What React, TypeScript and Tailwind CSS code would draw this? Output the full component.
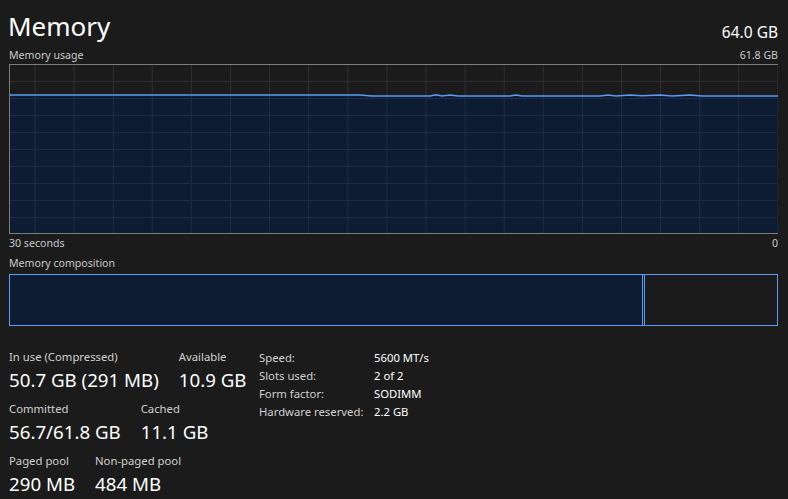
import React from "react";

const font = { fontFamily: '"Segoe UI", "Noto Sans", "Open Sans", sans-serif' };

// usage line, a few small bumps where the value wobbles
const linePts: [number, number][] = [
  [0, 30], [350, 30], [356, 30.6], [362, 31], [420, 31], [426, 29.8], [432, 31],
  [440, 30], [448, 31], [500, 31], [506, 30], [512, 31], [590, 31], [598, 29.9],
  [606, 31], [620, 29.9], [632, 30.8], [650, 30], [662, 31], [680, 30], [692, 31], [768, 31],
];

function UsageChart() {
  const w = 768;
  const h = 168;
  const vLines = Array.from({ length: 20 }, (_, i) => 25 + i * 39.1).filter((x) => x < w);
  const hLines = Array.from({ length: 9 }, (_, i) => 16 + i * 17);
  const line = linePts.map(([x, y]) => `${x},${y}`).join(" ");
  const area = `M0,${h} L${linePts.map(([x, y]) => `${x},${y}`).join(" L")} L${w},${h} Z`;
  return (
    <div className="h-[170px] w-full border border-[#7c7c7c]">
      <svg width={w} height={h} viewBox={`0 0 ${w} ${h}`} className="block">
        <defs>
          <clipPath id="fillclip">
            <path d={area} />
          </clipPath>
        </defs>
        <rect width={w} height={h} fill="#1b1b1b" />
        {vLines.map((x) => (
          <line key={`v${x}`} x1={x} x2={x} y1={0} y2={h} stroke="#2f2f2f" strokeWidth={1} />
        ))}
        {hLines.map((y) => (
          <line key={`h${y}`} x1={0} x2={w} y1={y + 0.5} y2={y + 0.5} stroke="#2f2f2f" strokeWidth={1} />
        ))}
        <path d={area} fill="#0e1c33" />
        <g clipPath="url(#fillclip)">
          {vLines.map((x) => (
            <line key={`fv${x}`} x1={x} x2={x} y1={0} y2={h} stroke="#1f2c42" strokeWidth={1} />
          ))}
          {hLines.map((y) => (
            <line key={`fh${y}`} x1={0} x2={w} y1={y + 0.5} y2={y + 0.5} stroke="#1f2c42" strokeWidth={1} />
          ))}
        </g>
        <polyline points={line} fill="none" stroke="#5a9cf6" strokeWidth={1.5} />
      </svg>
    </div>
  );
}

function Stat({ label, value }: { label: string; value: string }) {
  return (
    <div className="flex flex-col">
      <span className="text-[11.3px] leading-[16px] text-[#d0d0d0]">{label}</span>
      <span className="mt-[2px] text-[18.7px] leading-[25px] text-white">{value}</span>
    </div>
  );
}

export default function App() {
  const specs = [
    ["Speed:", "5600 MT/s"],
    ["Slots used:", "2 of 2"],
    ["Form factor:", "SODIMM"],
    ["Hardware reserved:", "2.2 GB"],
  ];
  return (
    <div className="h-[499px] w-[788px] overflow-hidden bg-[#1b1b1b] pl-[9px] pr-[10px]" style={font}>
      <div className="flex h-[47px] items-end justify-between pb-[4px]">
        <span className="ml-[-1px] text-[26px] leading-[34px] text-white">Memory</span>
        <span className="text-[15.5px] leading-[22px] text-white">64.0 GB</span>
      </div>
      <div className="flex h-[17px] items-center justify-between text-[10.6px] text-[#c9c9c9]">
        <span>Memory usage</span>
        <span>61.8 GB</span>
      </div>
      <UsageChart />
      <div className="flex h-[20px] items-center justify-between text-[10.6px] text-[#c9c9c9]">
        <span>30 seconds</span>
        <span>0</span>
      </div>
      <div className="flex h-[19px] items-center text-[10.6px] text-[#c9c9c9]">
        <span>Memory composition</span>
      </div>
      <div className="mt-[1px] flex h-[52px] w-full border border-[#5a9cf6]">
        <div className="h-full w-[632px] bg-[#0e1c33]" />
        <div className="h-full w-[1px] bg-[#5a9cf6]" />
        <div className="h-full w-[1px] bg-[#0e1c33]" />
        <div className="h-full w-[1px] bg-[#5a9cf6]" />
        <div className="h-full flex-1 bg-[#1b1b1b]" />
      </div>
      <div className="mt-[23px] flex">
        <div className="flex w-[250px] flex-col gap-[9px]">
          <div className="flex gap-[20px]">
            <Stat label="In use (Compressed)" value="50.7 GB (291 MB)" />
            <Stat label="Available" value="10.9 GB" />
          </div>
          <div className="flex gap-[20px]">
            <Stat label="Committed" value="56.7/61.8 GB" />
            <Stat label="Cached" value="11.1 GB" />
          </div>
          <div className="flex gap-[20px]">
            <Stat label="Paged pool" value="290 MB" />
            <Stat label="Non-paged pool" value="484 MB" />
          </div>
        </div>
        <div className="flex flex-col">
          {specs.map(([k, v]) => (
            <div key={k} className="flex h-[18px] items-center text-[11.3px]">
              <span className="w-[115px] text-[#d0d0d0]">{k}</span>
              <span className="text-white">{v}</span>
            </div>
          ))}
        </div>
      </div>
    </div>
  );
}
